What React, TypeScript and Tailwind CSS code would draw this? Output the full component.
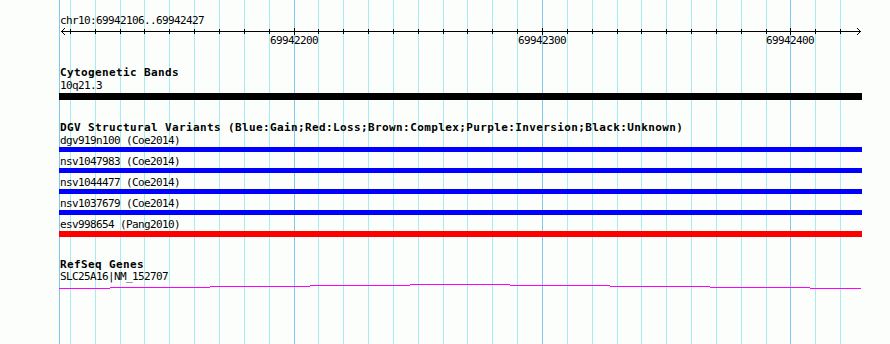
import React from "react";

const COLS = [70, 95, 120, 144, 169, 194, 219, 244, 269, 294, 318, 343, 368, 393, 418, 443, 467, 492, 517, 542, 567, 592, 617, 641, 666, 691, 716, 741, 766, 790, 815, 840];
const MAJOR = [294, 542, 790];
const MINOR_C = "#a8ecf0";
const MAJOR_C = "#80c8ee";

const LABELS = [
  { x: 294, t: "69942200" },
  { x: 542, t: "69942300" },
  { x: 790, t: "69942400" },
];

const MAGENTA: [number, number, number][] = [
  [59, 110, 288],
  [110, 210, 287],
  [210, 310, 286],
  [310, 410, 285],
  [410, 510, 284],
  [510, 610, 285],
  [610, 710, 286],
  [710, 810, 287],
  [810, 861, 288],
];

const DGV = [
  { name: "dgv919n100 (Coe2014)", color: "bg-[#0000ff]", h: "h-[5px]" },
  { name: "nsv1047983 (Coe2014)", color: "bg-[#0000ff]", h: "h-[5px]" },
  { name: "nsv1044477 (Coe2014)", color: "bg-[#0000ff]", h: "h-[5px]" },
  { name: "nsv1037679 (Coe2014)", color: "bg-[#0000ff]", h: "h-[5px]" },
  { name: "esv998654 (Pang2010)", color: "bg-[#ff0000]", h: "h-[6px]" },
];

function Grid() {
  return (
    <svg className="absolute inset-0" width={890} height={344} shapeRendering="crispEdges">
      <rect x={59} y={0} width={1} height={344} fill={MAJOR_C} />
      {COLS.map((c) => (
        <rect key={c} x={c} y={0} width={1} height={344} fill={MAJOR.includes(c) ? MAJOR_C : MINOR_C} />
      ))}
    </svg>
  );
}

function Axis() {
  return (
    <svg className="block" width={890} height={8} shapeRendering="crispEdges">
      <rect x={61} y={4} width={800} height={1} fill="#000" />
      {COLS.map((c) =>
        MAJOR.includes(c) ? (
          <rect key={c} x={c} y={1} width={1} height={7} fill="#000" />
        ) : (
          <rect key={c} x={c} y={2} width={1} height={5} fill="#000" />
        )
      )}
      <rect x={62} y={3} width={1} height={1} fill="#000" />
      <rect x={63} y={2} width={1} height={1} fill="#000" />
      <rect x={64} y={1} width={1} height={1} fill="#000" />
      <rect x={62} y={5} width={1} height={1} fill="#000" />
      <rect x={63} y={6} width={1} height={1} fill="#000" />
      <rect x={64} y={7} width={1} height={1} fill="#000" />
      <rect x={859} y={3} width={1} height={1} fill="#000" />
      <rect x={858} y={2} width={1} height={1} fill="#000" />
      <rect x={857} y={1} width={1} height={1} fill="#000" />
      <rect x={859} y={5} width={1} height={1} fill="#000" />
      <rect x={858} y={6} width={1} height={1} fill="#000" />
      <rect x={857} y={7} width={1} height={1} fill="#000" />
    </svg>
  );
}

function GeneLine() {
  return (
    <svg className="block" width={890} height={7} shapeRendering="crispEdges">
      {MAGENTA.map(([a, b, y]) => (
        <rect key={a} x={a} y={y - 283} width={b - a} height={1} fill="#ff00ff" />
      ))}
    </svg>
  );
}

export default function App() {
  const txt = "pl-[60px] h-[12px] leading-[12px] whitespace-nowrap";
  const bold = "font-bold tracking-[0.38px]";
  return (
    <div className="relative w-[890px] h-[344px] overflow-hidden bg-[#fcfefc] text-black font-['DejaVu_Sans_Mono',monospace] text-[11px] tracking-[-0.62px]">
      <Grid />
      <div className="relative flex flex-col">
        <div className={`${txt} mt-[15px]`}>chr10:69942106..69942427</div>
        <Axis />
        <div className="relative h-[12px] leading-[12px]">
          {LABELS.map((l) => (
            <span
              key={l.t}
              className="absolute top-0 w-[48px] text-center whitespace-nowrap"
              style={{ left: l.x - 24 }}
            >
              {l.t}
            </span>
          ))}
        </div>

        <div className={`${txt} ${bold} mt-[20px]`}>Cytogenetic Bands</div>
        <div className={`${txt} mt-px`}>10q21.3</div>
        <div className="ml-[59px] w-[803px] h-[7px] mt-px bg-black" />

        <div className={`${txt} ${bold} mt-[22px]`}>
          DGV Structural Variants (Blue:Gain;Red:Loss;Brown:Complex;Purple:Inversion;Black:Unknown)
        </div>
        {DGV.map((d, i) => (
          <div key={d.name} className={`flex flex-col ${i === 0 ? "mt-px" : "mt-[4px]"}`}>
            <div className={txt}>{d.name}</div>
            <div className={`ml-[59px] w-[803px] ${d.h} ${d.color}`} />
          </div>
        ))}

        <div className={`${txt} ${bold} mt-[22px]`}>RefSeq Genes</div>
        <div className={txt}>SLC25A16|NM_152707</div>
        <GeneLine />
      </div>
    </div>
  );
}
